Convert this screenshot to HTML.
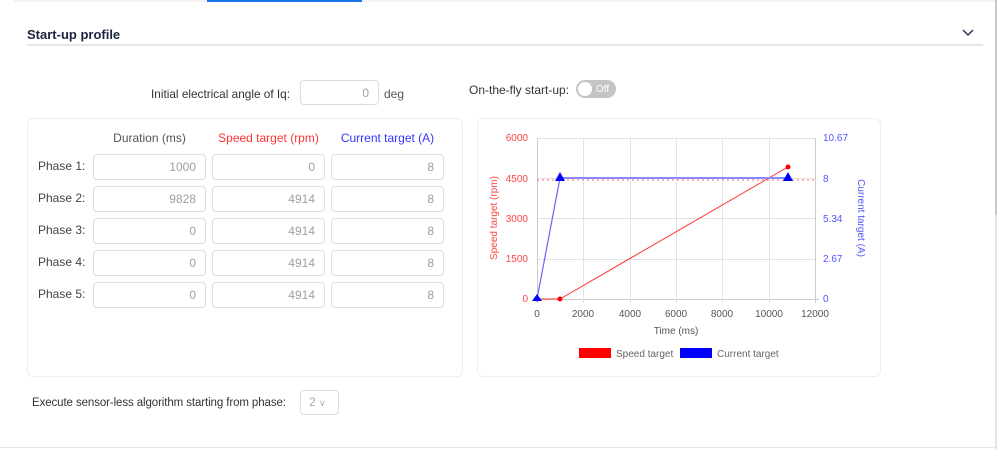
<!DOCTYPE html>
<html><head><meta charset="utf-8"><style>
*{box-sizing:border-box;margin:0;padding:0}
body{width:998px;height:449px;background:#fff;font-family:"Liberation Sans",sans-serif;position:relative;overflow:hidden;color:#333}
.a{position:absolute}
.inp{position:absolute;height:26px;border:1px solid #ddd;border-radius:4px;text-align:right;padding-right:9px;font-size:12px;color:#a0a0a0;line-height:24px}
.lbl{position:absolute;font-size:12px;color:#444}
</style></head><body>
<div class="a" style="left:14px;top:0;width:982px;height:2px;background:#f3f3f3"></div>
<div class="a" style="left:207px;top:0;width:155px;height:2px;background:#1a73e8"></div>
<div class="a" style="left:995px;top:0;width:2px;height:449px;background:#e4e4e4"></div>
<div class="a" style="left:995px;top:0;width:2px;height:215px;background:#c8c8c8"></div>
<div class="a" style="left:27px;top:27px;font-size:13px;font-weight:bold;color:#1a2340">Start-up profile</div>
<div class="a" style="left:27px;top:44px;width:956px;height:2px;background:#e6e6e6"></div>
<svg class="a" style="left:962px;top:28px" width="12" height="10"><path d="M1 2 L6 7 L11 2" fill="none" stroke="#2a3550" stroke-width="1.5"/></svg>

<div class="lbl" style="left:151px;top:87px;color:#333;font-size:11.8px">Initial electrical angle of Iq:</div>
<div class="inp" style="left:300px;top:80px;width:79px;height:25px">0</div>
<div class="lbl" style="left:384px;top:87px;color:#555">deg</div>
<div class="lbl" style="left:469px;top:83px;color:#333">On-the-fly start-up:</div>
<div class="a" style="left:576px;top:80px;width:40px;height:18px;border-radius:9px;background:#c4c4c4"></div>
<div class="a" style="left:578px;top:82px;width:14px;height:14px;border-radius:7px;background:#fff"></div>
<div class="a" style="left:596px;top:84px;font-size:10px;color:#fff">Off</div>

<div class="a" style="left:27px;top:118px;width:436px;height:259px;border:1px solid #eee;border-radius:6px"></div>
<div class="lbl" style="left:93px;top:131px;width:113px;text-align:center;color:#555">Duration (ms)</div>
<div class="lbl" style="left:212px;top:131px;width:113px;text-align:center;color:#f33">Speed target (rpm)</div>
<div class="lbl" style="left:331px;top:131px;width:113px;text-align:center;color:#33f">Current target (A)</div>

<div class="lbl" style="left:38px;top:159px">Phase 1:</div>
<div class="inp" style="left:93px;top:154px;width:113px">1000</div><div class="inp" style="left:212px;top:154px;width:113px">0</div><div class="inp" style="left:331px;top:154px;width:113px">8</div>
<div class="lbl" style="left:38px;top:191px">Phase 2:</div>
<div class="inp" style="left:93px;top:186px;width:113px">9828</div><div class="inp" style="left:212px;top:186px;width:113px">4914</div><div class="inp" style="left:331px;top:186px;width:113px">8</div>
<div class="lbl" style="left:38px;top:223px">Phase 3:</div>
<div class="inp" style="left:93px;top:218px;width:113px">0</div><div class="inp" style="left:212px;top:218px;width:113px">4914</div><div class="inp" style="left:331px;top:218px;width:113px">8</div>
<div class="lbl" style="left:38px;top:255px">Phase 4:</div>
<div class="inp" style="left:93px;top:250px;width:113px">0</div><div class="inp" style="left:212px;top:250px;width:113px">4914</div><div class="inp" style="left:331px;top:250px;width:113px">8</div>
<div class="lbl" style="left:38px;top:287px">Phase 5:</div>
<div class="inp" style="left:93px;top:282px;width:113px">0</div><div class="inp" style="left:212px;top:282px;width:113px">4914</div><div class="inp" style="left:331px;top:282px;width:113px">8</div>

<div class="a" style="left:477px;top:118px;width:404px;height:259px;border:1px solid #eee;border-radius:6px"></div>
<svg class="a" style="left:0;top:0" width="998" height="449" font-family="Liberation Sans, sans-serif" font-size="10">
<g stroke="#e2e2e2" stroke-width="1">
<line x1="537" y1="138.5" x2="815" y2="138.5"/><line x1="537" y1="178.5" x2="815" y2="178.5"/><line x1="537" y1="218.5" x2="815" y2="218.5"/><line x1="537" y1="259.5" x2="815" y2="259.5"/><line x1="533" y1="299.5" x2="819" y2="299.5" stroke="#ccc"/>
<line x1="537.5" y1="138" x2="537.5" y2="303" stroke="#ccc"/><line x1="583.5" y1="138" x2="583.5" y2="303"/><line x1="630.5" y1="138" x2="630.5" y2="303"/><line x1="676.5" y1="138" x2="676.5" y2="303"/><line x1="722.5" y1="138" x2="722.5" y2="303"/><line x1="769.5" y1="138" x2="769.5" y2="303"/><line x1="815.5" y1="138" x2="815.5" y2="303" stroke="#ccc"/>
</g>
<line x1="537" y1="180" x2="815" y2="180" stroke="#f66" stroke-dasharray="2,3" stroke-width="1"/>
<polyline points="537,299 560,299 788,167" fill="none" stroke="#f33" stroke-width="1"/>
<circle cx="537" cy="299" r="2.5" fill="#f00"/><circle cx="560" cy="299" r="2.5" fill="#f00"/><circle cx="788" cy="167" r="2.5" fill="#f00"/>
<polyline points="537,299 560,178 788,178" fill="none" stroke="#66f" stroke-width="1.2"/>
<line x1="560" y1="178" x2="788" y2="178" stroke="#88f" stroke-width="2"/>
<path d="M537,294 L542,301 L532,301Z M560,172 L565,181 L555,181Z M788,172 L793,181 L783,181Z" fill="#00f"/>
<g fill="#f44" text-anchor="end"><text x="528" y="141">6000</text><text x="528" y="182">4500</text><text x="528" y="222">3000</text><text x="528" y="262">1500</text><text x="528" y="302">0</text></g>
<g fill="#55f"><text x="823" y="141">10.67</text><text x="823" y="182">8</text><text x="823" y="222">5.34</text><text x="823" y="262">2.67</text><text x="823" y="302">0</text></g>
<g fill="#555" text-anchor="middle"><text x="537" y="317">0</text><text x="583" y="317">2000</text><text x="630" y="317">4000</text><text x="676" y="317">6000</text><text x="722" y="317">8000</text><text x="769" y="317">10000</text><text x="815" y="317">12000</text>
<text x="676" y="334">Time (ms)</text></g>
<text transform="translate(497,218) rotate(-90)" text-anchor="middle" fill="#f44">Speed target (rpm)</text>
<text transform="translate(858,218) rotate(90)" text-anchor="middle" fill="#55f">Current target (A)</text>
<rect x="579" y="348" width="32" height="10" fill="#f00"/><text x="616" y="357" fill="#666">Speed target</text>
<rect x="680" y="348" width="32" height="10" fill="#00f"/><text x="717" y="357" fill="#666">Current target</text>
</svg>

<div class="lbl" style="left:32px;top:397px;color:#333;font-size:11.5px;letter-spacing:-0.1px">Execute sensor-less algorithm starting from phase:</div>
<div class="a" style="left:300px;top:390px;width:39px;height:25px;border:1px solid #ddd;border-radius:4px;font-size:12px;color:#aaa;line-height:23px;padding-left:8px">2 <span style="font-size:9px">&#8744;</span></div>
<div class="a" style="left:0;top:447px;width:995px;height:1px;background:#e6e6e6"></div>
</body></html>
